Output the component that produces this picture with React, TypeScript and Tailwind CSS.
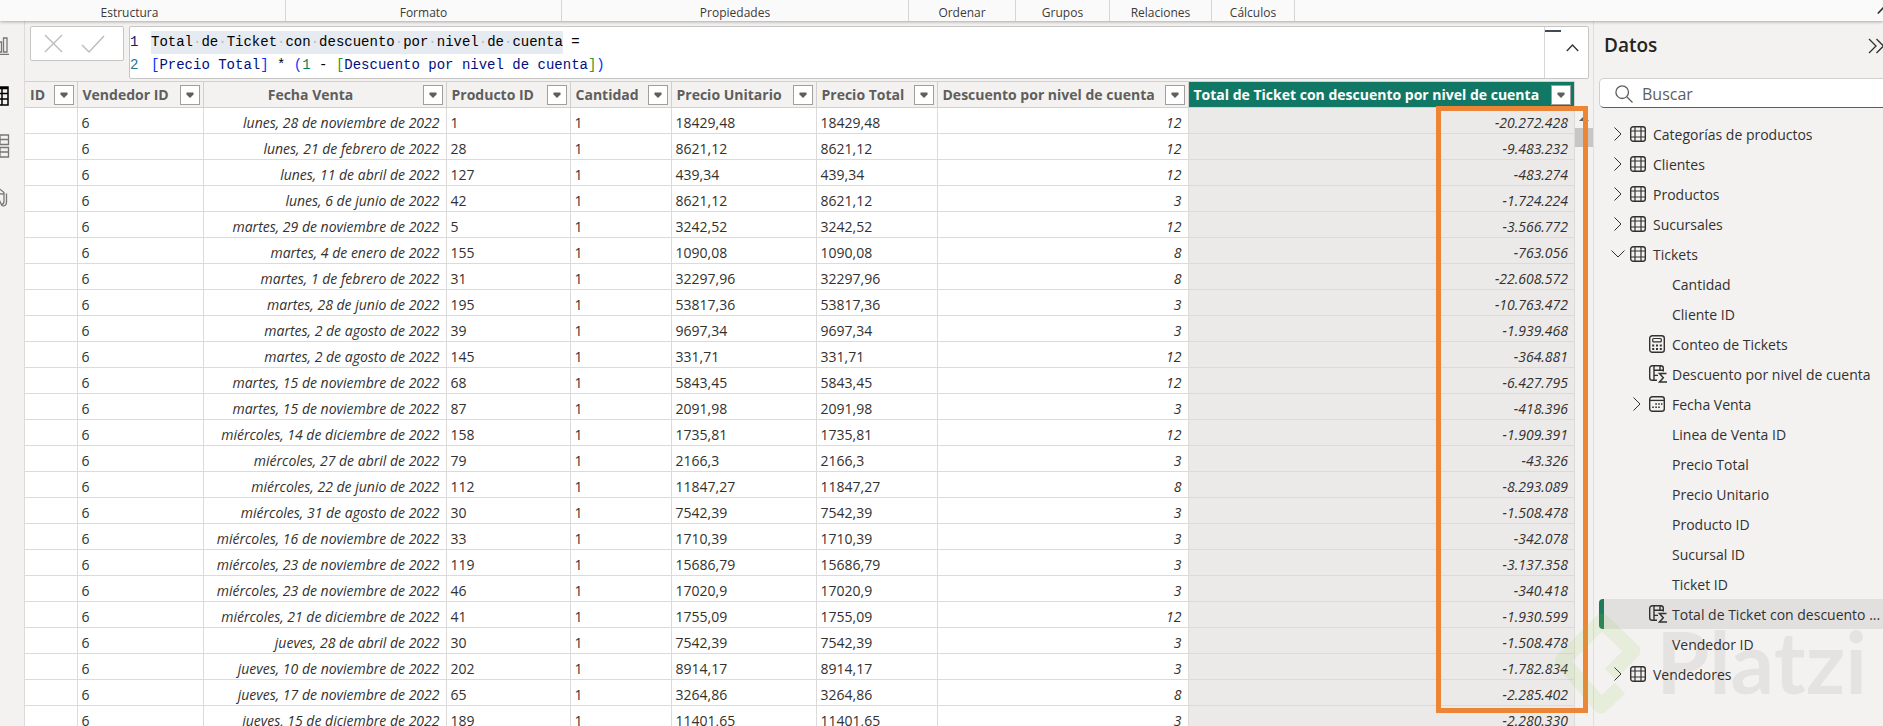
import type { ReactNode } from 'react';

const ribbonGroups = [
	{ label: 'Formato', width: 'w-[276px]' },
	{ label: 'Propiedades', width: 'w-[347px]' },
	{ label: 'Ordenar', width: 'w-[107px]' },
	{ label: 'Grupos', width: 'w-[94px]' },
	{ label: 'Relaciones', width: 'w-[102px]' },
	{ label: 'Cálculos', width: 'w-[83px]' },
];

const columns = [
	{ label: 'ID', width: 'w-[52px]' },
	{ label: 'Vendedor ID', width: 'w-[126px]' },
	{ label: 'Fecha Venta', width: 'w-[243px]', center: true },
	{ label: 'Producto ID', width: 'w-[124px]' },
	{ label: 'Cantidad', width: 'w-[101px]' },
	{ label: 'Precio Unitario', width: 'w-[145px]' },
	{ label: 'Precio Total', width: 'w-[121px]' },
	{ label: 'Descuento por nivel de cuenta', width: 'w-[251px]' },
	{ label: 'Total de Ticket con descuento por nivel de cuenta', width: '', active: true },
];

// fecha, producto, precio, descuento, total
const rows = [
	['lunes, 28 de noviembre de 2022', '1', '18429,48', '12', '-20.272.428'],
	['lunes, 21 de febrero de 2022', '28', '8621,12', '12', '-9.483.232'],
	['lunes, 11 de abril de 2022', '127', '439,34', '12', '-483.274'],
	['lunes, 6 de junio de 2022', '42', '8621,12', '3', '-1.724.224'],
	['martes, 29 de noviembre de 2022', '5', '3242,52', '12', '-3.566.772'],
	['martes, 4 de enero de 2022', '155', '1090,08', '8', '-763.056'],
	['martes, 1 de febrero de 2022', '31', '32297,96', '8', '-22.608.572'],
	['martes, 28 de junio de 2022', '195', '53817,36', '3', '-10.763.472'],
	['martes, 2 de agosto de 2022', '39', '9697,34', '3', '-1.939.468'],
	['martes, 2 de agosto de 2022', '145', '331,71', '12', '-364.881'],
	['martes, 15 de noviembre de 2022', '68', '5843,45', '12', '-6.427.795'],
	['martes, 15 de noviembre de 2022', '87', '2091,98', '3', '-418.396'],
	['miércoles, 14 de diciembre de 2022', '158', '1735,81', '12', '-1.909.391'],
	['miércoles, 27 de abril de 2022', '79', '2166,3', '3', '-43.326'],
	['miércoles, 22 de junio de 2022', '112', '11847,27', '8', '-8.293.089'],
	['miércoles, 31 de agosto de 2022', '30', '7542,39', '3', '-1.508.478'],
	['miércoles, 16 de noviembre de 2022', '33', '1710,39', '3', '-342.078'],
	['miércoles, 23 de noviembre de 2022', '119', '15686,79', '3', '-3.137.358'],
	['miércoles, 23 de noviembre de 2022', '46', '17020,9', '3', '-340.418'],
	['miércoles, 21 de diciembre de 2022', '41', '1755,09', '12', '-1.930.599'],
	['jueves, 28 de abril de 2022', '30', '7542,39', '3', '-1.508.478'],
	['jueves, 10 de noviembre de 2022', '202', '8914,17', '3', '-1.782.834'],
	['jueves, 17 de noviembre de 2022', '65', '3264,86', '8', '-2.285.402'],
	['jueves, 15 de diciembre de 2022', '189', '11401,65', '3', '-2.280.330'],
];

type TreeItem = {
	label: string;
	icon?: 'table' | 'calculator' | 'column' | 'calendar';
	child?: boolean;
	chevron?: 'right' | 'down';
	selected?: boolean;
};

const tree: TreeItem[] = [
	{ label: 'Categorías de productos', icon: 'table', chevron: 'right' },
	{ label: 'Clientes', icon: 'table', chevron: 'right' },
	{ label: 'Productos', icon: 'table', chevron: 'right' },
	{ label: 'Sucursales', icon: 'table', chevron: 'right' },
	{ label: 'Tickets', icon: 'table', chevron: 'down' },
	{ label: 'Cantidad', child: true },
	{ label: 'Cliente ID', child: true },
	{ label: 'Conteo de Tickets', icon: 'calculator', child: true },
	{ label: 'Descuento por nivel de cuenta', icon: 'column', child: true },
	{ label: 'Fecha Venta', icon: 'calendar', child: true, chevron: 'right' },
	{ label: 'Linea de Venta ID', child: true },
	{ label: 'Precio Total', child: true },
	{ label: 'Precio Unitario', child: true },
	{ label: 'Producto ID', child: true },
	{ label: 'Sucursal ID', child: true },
	{ label: 'Ticket ID', child: true },
	{ label: 'Total de Ticket con descuento ...', icon: 'column', child: true, selected: true },
	{ label: 'Vendedor ID', child: true },
	{ label: 'Vendedores', icon: 'table', chevron: 'right' },
];

const Svg = ({ className, box, children }: { className: string; box: string; children: ReactNode }) => (
	<svg className={className} viewBox={box} fill="none" stroke="currentColor" aria-hidden="true">
		{children}
	</svg>
);

const TreeIcon = ({ icon }: { icon: TreeItem['icon'] }) => {
	if (icon === 'table') {
		return (
			<Svg className="size-4" box="0 0 16 16">
				<rect x="0.7" y="0.7" width="14.6" height="14.6" rx="2.6" strokeWidth="1.4" />
				<path d="M5 1v14M11 1v14M1 5h14M1 11h14" strokeWidth="1.2" />
			</Svg>
		);
	}
	if (icon === 'calculator') {
		return (
			<Svg className="h-[18px] w-4" box="0 0 16 18">
				<rect x="0.7" y="0.7" width="14.6" height="16.6" rx="2.6" strokeWidth="1.4" />
				<rect x="3.7" y="3.5" width="8.6" height="3.4" rx="1" strokeWidth="1.2" />
				<path d="M3.2 10.5h2M7 10.5h2M10.8 10.5h2M3.2 14h2M7 14h2M10.8 14h2" strokeWidth="1.9" />
			</Svg>
		);
	}
	if (icon === 'calendar') {
		return (
			<Svg className="size-4" box="0 0 16 16">
				<rect x="0.7" y="0.7" width="14.6" height="14.6" rx="2.6" strokeWidth="1.4" />
				<path d="M1 4.4h14" strokeWidth="1.3" />
				<path d="M6.3 8h1.6M9.2 8h1.6M12 8h1.4M3.2 11.3h1.6M6.3 11.3h1.6M9.2 11.3h1.6" strokeWidth="1.6" />
			</Svg>
		);
	}
	return (
		<Svg className="h-[18px] w-[19px]" box="0 0 19 18">
			<path
				d="M14.3 6.5V3.3A2.6 2.6 0 0 0 11.7.7H3.3A2.6 2.6 0 0 0 .7 3.3v9.4a2.6 2.6 0 0 0 2.6 2.6H8M5 1v14M11 1v5M5 5.2h9M5 10.4h4"
				strokeWidth="1.4"
			/>
			<path d="M17.5 8.5h-7l3.8 4.2-3.8 4.3H18" strokeWidth="1.5" />
		</Svg>
	);
};

const Chevron = ({ down }: { down?: boolean }) =>
	down ? (
		<Svg className="h-2 w-3.5" box="0 0 14 8">
			<path d="M.5.5 7 7 13.5.5" strokeWidth="1" />
		</Svg>
	) : (
		<Svg className="h-3.5 w-2" box="0 0 8 14">
			<path d="M.5.5 7 7 .5 13.5" strokeWidth="1" />
		</Svg>
	);

const Ribbon = () => (
	<header className="relative z-10 flex h-[21px] items-stretch overflow-hidden bg-[#fafafa] text-[12px] leading-[18px] text-[#3b3a39] shadow-[0_1px_3px_rgba(0,0,0,0.3)]">
		<div className="w-[286px] border-r border-[#d8d6d4] pt-1 pr-[26px] text-center">Estructura</div>
		{ribbonGroups.map((group) => (
			<div key={group.label} className={`${group.width} border-r border-[#d8d6d4] pt-1 text-center`}>
				{group.label}
			</div>
		))}
		<button type="button" aria-label="Contraer cinta" className="-mr-1.5 ml-auto text-[#323130]">
			<Svg className="h-[7px] w-3" box="0 0 12 7">
				<path d="M.8 6.5 6 1l5.2 5.5" strokeWidth="1.6" />
			</Svg>
		</button>
	</header>
);

const Rail = () => (
	<nav className="flex w-[25px] shrink-0 flex-col items-end gap-[30px] overflow-hidden border-r border-[#dddbd9] pt-[15px] pr-[15px] text-[#797775]">
		<button type="button" aria-label="Informe">
			<Svg className="size-5" box="0 0 20 20">
				<path d="M1 18.3h19M9 16V6h3.5v10zM14.5 16V2H18v14z" strokeWidth="1.3" />
			</Svg>
		</button>
		<button type="button" aria-label="Tabla" className="text-black">
			<Svg className="size-5" box="0 0 20 20">
				<path d="M1 1h18v18H1zM1 2.5h18M1 7.5h18M1 13h18M7 3v16M13 3v16" strokeWidth="1.5" />
			</Svg>
		</button>
		<button type="button" aria-label="Modelo">
			<Svg className="size-5 overflow-visible" box="0 0 20 20">
				<path d="M11-1h8.5v9.5H11zM11 3.5h8.500M11 11.500h8.500V21H11zM11 16h8.500M11 3.500H6v13h5" strokeWidth="1.3" />
			</Svg>
		</button>
		<button type="button" aria-label="Consultas DAX">
			<Svg className="size-5 overflow-visible" box="0 0 20 20">
				<path d="M7 0l8 6.5v9c0 2-1 3-3 3M17.5 7.500v8.500c0 2.500-1.500 4-4 4M5 7.500l10 .5M8.500 18.500l2.500-3 2 4.500" strokeWidth="1.3" />
			</Svg>
		</button>
	</nav>
);

const Dot = () => <span className="text-[#b8bfc6]">·</span>;

const FormulaBar = () => (
	<div className="flex items-start gap-[5px] pt-[5px] pr-1 pl-[5px]">
		<div className="flex h-[35px] w-[94px] shrink-0 items-center gap-[18px] rounded-[2px] border border-[#c8c6c4] bg-white pl-[13px] text-[#bdbbb9]">
			<button type="button" aria-label="Cancelar">
				<Svg className="size-[19px]" box="0 0 20 20">
					<path d="M1 1l18 18M19 1 1 19" strokeWidth="1.4" />
				</Svg>
			</button>
			<button type="button" aria-label="Confirmar">
				<Svg className="h-[18px] w-6" box="0 0 24 18">
					<path d="M1 10l7 7L23 1" strokeWidth="1.4" />
				</Svg>
			</button>
		</div>
		<div className="flex h-[53px] grow rounded-[2px] border border-[#c8c6c4] bg-white">
			<pre className="grow pt-1 font-['Liberation_Mono',monospace] text-[14px] leading-[23px] text-[#001080]">
				<div className="flex gap-3">
					<span className="w-[9px] text-[#0b216f]">1</span>
					<span className="text-black">
						<mark className="inline-block bg-[#e5ebf1] text-black">
							Total<Dot />de<Dot />Ticket<Dot />con<Dot />descuento<Dot />por<Dot />nivel<Dot />de<Dot />cuenta
						</mark>
						{' ='}
					</span>
				</div>
				<div className="flex gap-3">
					<span className="w-[9px] text-[#237893]">2</span>
					<span>
						<span className="text-[#0431fa]">[</span>Precio Total<span className="text-[#0431fa]">]</span>
						<span className="text-black"> * </span>
						<span className="text-[#0431fa]">(</span>
						<span className="text-[#098658]">1</span>
						<span className="text-black"> - </span>
						<span className="text-[#319331]">[</span>Descuento por nivel de cuenta<span className="text-[#319331]">]</span>
						<span className="text-[#0431fa]">)</span>
					</span>
				</div>
			</pre>
			<div className="flex w-11 flex-col border-l border-[#d8d6d4] pt-[3px]">
				<span className="h-0.5 w-4 bg-[#424a57]" />
				<button type="button" aria-label="Contraer fórmula" className="mt-3 mr-[9px] self-end text-[#323130]">
					<Svg className="h-2 w-[13px]" box="0 0 13 8">
						<path d="M.8 7 6.5 1l5.7 6" strokeWidth="1.3" />
					</Svg>
				</button>
			</div>
		</div>
	</div>
);

const DataTable = () => (
	<div className="relative mt-[2px] flex">
		<table className="w-full table-fixed border-collapse text-[14px] text-[#323130]">
			<thead>
				<tr className="h-[26px] border-y border-[#d2d0ce] bg-[#f3f2f1]">
					{columns.map((column) => (
						<th
							key={column.label}
							scope="col"
							className={`${column.width} border-r border-[#d2d0ce] p-0 font-bold whitespace-nowrap ${column.active ? 'bg-[#117865] text-white' : 'text-[#605e5c]'}`}
						>
							<div className="flex items-center justify-between pr-[3px] pl-[5px]">
								<span className={column.center ? 'grow pr-2.5 text-center' : ''}>{column.label}</span>
								<button
									type="button"
									aria-label={`Filtrar ${column.label}`}
									className="flex size-5 shrink-0 items-center justify-center border border-[#a19f9d] bg-white text-[#605e5c]"
								>
									<svg className="h-1.5 w-2" viewBox="0 0 8 6" fill="currentColor">
										<path d="M.5.5h7v2L4 6 .5 2.5z" />
									</svg>
								</button>
							</div>
						</th>
					))}
				</tr>
			</thead>
			<tbody className="bg-white">
				{rows.map(([fecha, producto, precio, descuento, total]) => (
					<tr
						key={`${fecha}-${producto}`}
						className="h-[26px] border-b border-[#dddbd9] whitespace-nowrap *:border-r *:border-[#dddbd9] *:pt-1 *:pr-1.5 *:pb-0 *:pl-1 *:leading-5"
					>
						<td />
						<td>6</td>
						<td className="text-right italic">{fecha}</td>
						<td>{producto}</td>
						<td>1</td>
						<td>{precio}</td>
						<td>{precio}</td>
						<td className="text-right italic">{descuento}</td>
						<td className="bg-[#ebeae9] text-right italic">{total}</td>
					</tr>
				))}
			</tbody>
		</table>
		<div className="flex w-[18px] shrink-0 flex-col items-center pt-[35px]">
			<svg className="h-[5px] w-2.5" viewBox="0 0 10 5" fill="#605e5c">
				<path d="M5 0l5 5H0z" />
			</svg>
			<span className="mt-[7px] h-[19px] w-full bg-[#c8c6c4]" />
		</div>
		{/* Highlight over the computed totals */}
		<div className="absolute top-[25px] right-[5px] h-[607px] w-[152px] border-[5px] border-[#ed8537]" />
	</div>
);

const DataPane = () => (
	<aside className="w-[290px] shrink-0 overflow-hidden border-l border-[#e1dfdd]">
		<div className="mb-[9px] flex h-12 items-center justify-between pt-px pl-2.5">
			<h2 className="text-[19px] font-semibold text-[#252423]">Datos</h2>
			<button type="button" aria-label="Contraer panel" className="-mr-0.5 text-[#323130]">
				<Svg className="h-4 w-[17px]" box="0 0 17 16">
					<path d="M1 1l7 7-7 7M8.5 1l7 7-7 7" strokeWidth="1.3" />
				</Svg>
			</button>
		</div>
		<label className="-mr-1 ml-[5px] flex h-[30px] items-center gap-[9px] rounded-[5px] border border-[#d2d0ce] border-b-[#605e5c] bg-white pt-0.5 pl-[15px] text-[#605e5c]">
			<Svg className="size-[18px]" box="0 0 18 18">
				<circle cx="7.2" cy="7.2" r="6.3" strokeWidth="1.3" />
				<path d="M12 12l5.5 5.5" strokeWidth="1.3" />
			</Svg>
			<input aria-label="Buscar" placeholder="Buscar" className="w-52 text-[16px] outline-none placeholder:text-[#605e5c]" />
		</label>
		<ul className="mt-[11px] text-[14px] text-[#323130]">
			{tree.map((item) => (
				<li
					key={item.label}
					className={`ml-[5px] flex h-[30px] items-center ${item.selected ? 'rounded-l-[4px] border-l-[5px] border-[#1f7a5c] bg-[#e1e0df]' : 'pl-[5px]'}`}
				>
					<button type="button" className={`flex items-center whitespace-nowrap ${item.child ? 'pl-[25px]' : 'pl-1.5'}`}>
						<span className="flex w-5 justify-center pr-1">{item.chevron && <Chevron down={item.chevron === 'down'} />}</span>
						<span className="flex w-[23px]">{item.icon && <TreeIcon icon={item.icon} />}</span>
						{item.label}
					</button>
				</li>
			))}
		</ul>
	</aside>
);

const Watermark = () => (
	<div className="pointer-events-none absolute top-[586px] right-4 flex items-center gap-4">
		<Svg className="h-[108px] w-[86px] text-[#8fd03c]/12" box="12 12 86 108">
			<path d="M78 93 59 111 20 66 60 26 91 56 68 79" strokeWidth="15" strokeLinejoin="round" />
		</Svg>
		<span className="font-['Lato',sans-serif] text-[86px] leading-[100px] font-bold text-black/6">Platzi</span>
	</div>
);

export default function App() {
	return (
		<div className="h-screen overflow-hidden bg-[#f3f2f1] font-['Open_Sans','Noto_Sans',sans-serif]">
			<Ribbon />
			<div className="relative flex h-full">
				<Rail />
				<main className="min-w-0 grow">
					<FormulaBar />
					<DataTable />
				</main>
				<DataPane />
				<Watermark />
			</div>
		</div>
	);
}
